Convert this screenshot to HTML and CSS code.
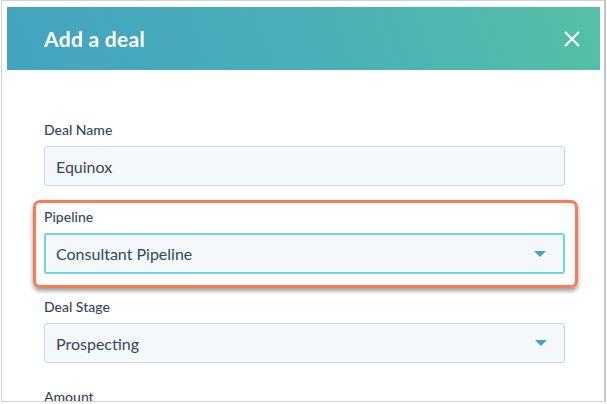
FILE: index.html
```html
<!DOCTYPE html>
<html>
    <head>
        <title>Add a deal</title>
        <link rel="stylesheet" href="styles.css">
    </head>
    <body>

        <!-- Dialog window -->
        <div class="frame">

            <!-- Header -->
            <div class="header">
                <span class="title">Add a deal</span>
                <svg class="close" width="16" height="16" viewBox="0 0 16 16">
                    <path d="M1 1 L15 15 M15 1 L1 15" stroke="#fff" stroke-width="2" fill="none"/>
                </svg>
            </div>

            <!-- Form -->
            <div class="form">
                <div class="field">
                    <label>Deal Name</label>
                    <div class="input">Equinox</div>
                </div>

                <div class="highlight">
                    <label>Pipeline</label>
                    <div class="input select focused">
                        Consultant Pipeline
                        <span class="caret"></span>
                    </div>
                </div>

                <div class="field last">
                    <label>Deal Stage</label>
                    <div class="input select">
                        Prospecting
                        <span class="caret"></span>
                    </div>
                </div>

                <div class="field">
                    <label>Amount</label>
                </div>
            </div>
        </div>

    </body>
</html>
```

FILE: styles.css
```css
/* Page */
body {
margin: 0;
padding: 0;
font-family: Lato, "Open Sans", sans-serif;
color: #33475b;
background-color: #fff;
}

/* Window frame with thin gray edge */
.frame {
margin-left: 1px;
width: 605px;
height: 402px;
border: 1px solid #d2d2d2;
border-right: 2px solid #c4c4c4;
box-sizing: border-box;
overflow: hidden;
}

/* Teal header */
.header {
margin: 6px 4px 0 5px;
height: 63px;
display: flex;
align-items: center;
justify-content: space-between;
padding: 0 20px 0 37px;
background: linear-gradient(70deg, #43a3bf 0%, #4aaeb8 50%, #55c0a5 100%);
color: #fff;
}

.title {
font-size: 21px;
font-weight: bold;
letter-spacing: 0.3px;
}

.close {
display: block;
}

/* Form fields */
.form {
padding: 52px 0 0 42px;
width: 521px;
}

.field {
margin-bottom: 14px;
}

.field.last {
margin-bottom: 26px;
}

label {
display: block;
font-size: 14px;
font-weight: 500;
line-height: 16px;
margin-bottom: 8px;
}

.input {
height: 40px;
box-sizing: border-box;
display: flex;
align-items: center;
justify-content: space-between;
padding: 0 17px 0 11px;
background-color: #f5f8fa;
border: 1px solid #cbd6e2;
border-radius: 3px;
font-size: 16px;
}

.focused {
border: 2px solid #6dd5e5;
padding-left: 10px;
height: 41px;
}

/* Small blue triangle on selects */
.caret {
width: 0;
height: 0;
border-left: 6px solid transparent;
border-right: 6px solid transparent;
border-top: 6px solid #3ea6c1;
}

/* Orange box around the pipeline field */
.highlight {
margin: 0 -13px 11px -11px;
padding: 6px 10px 11px 8px;
border: 3px solid #f97a56;
border-radius: 7px;
box-shadow: 0 3px 4px rgba(0, 0, 0, 0.4);
}
```
